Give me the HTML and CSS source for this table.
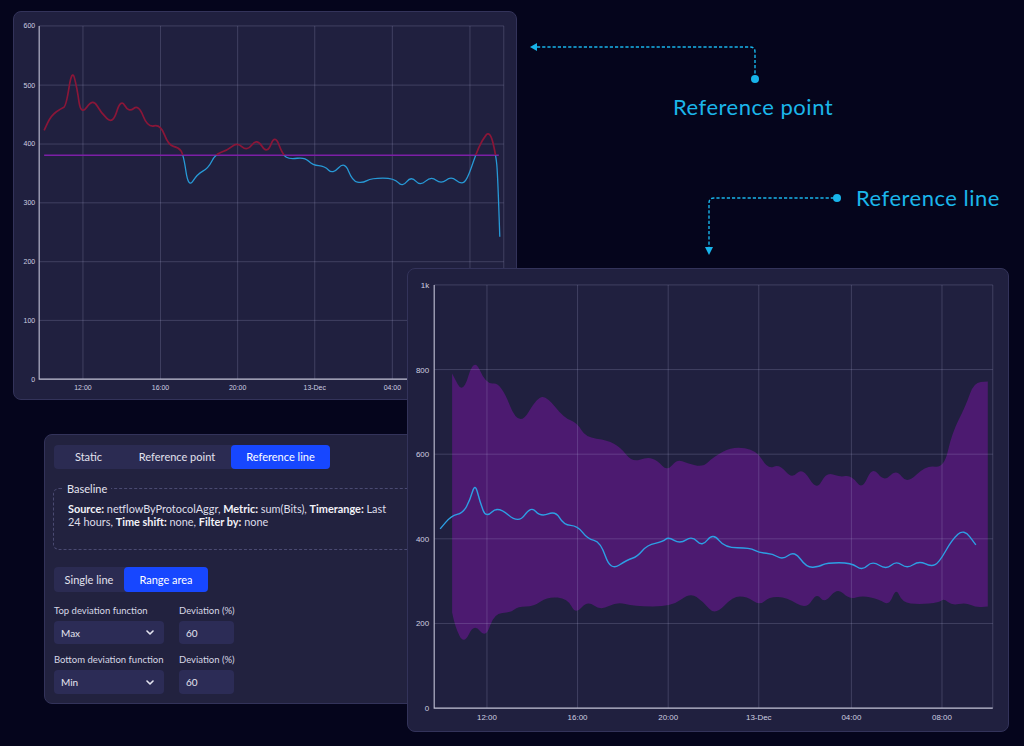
FILE: index.html
```html
<!DOCTYPE html>
<html lang="en">
<head>
<meta charset="utf-8">
<title>Reference line</title>
<link rel="stylesheet" href="styles.css">
</head>
<body>
<div class="stage">
  <svg class="callouts" viewBox="0 0 1024 746" aria-hidden="true">
    <path class="dash" d="M537,47 L750,47 Q755,47 755,52 L755,76"/>
    <polygon class="tip" points="530,47 537,43 537,51"/>
    <circle class="tip" cx="755" cy="79" r="4"/>
    <path class="dash" d="M834,198 L714,198 Q709,198 709,203 L709,247"/>
    <polygon class="tip" points="709,255 705,247 713,247"/>
    <circle class="tip" cx="837" cy="198" r="4"/>
  </svg>
  <div class="callout-label label-point">Reference point</div>
  <div class="callout-label label-line">Reference line</div>

  <section class="card chart-a">
    <svg class="plot" viewBox="13 11 504 389">
      <defs>
        <clipPath id="above"><rect x="13" y="11" width="504" height="144"/></clipPath>
        <clipPath id="below"><rect x="13" y="155" width="504" height="245"/></clipPath>
      </defs>
      <g class="grid">
        <path d="M38,25 H505 M38,84.5 H505 M38,143.7 H505 M38,202.8 H505 M38,262 H505 M38,321 H505"/>
        <path d="M82,25 V380 M160,25 V380 M237.5,25 V380 M315,25 V380 M393,25 V380 M471,25 V380 M505,25 V380"/>
      </g>
      <path class="axis" d="M38,25 V380 H505"/>
      <g class="ylab small">
        <text x="34" y="27.5">600</text>
        <text x="34" y="87">500</text>
        <text x="34" y="146">400</text>
        <text x="34" y="205">300</text>
        <text x="34" y="264.5">200</text>
        <text x="34" y="323.5">100</text>
        <text x="34" y="382.5">0</text>
      </g>
      <g class="xlab small">
        <text x="82" y="390.5">12:00</text>
        <text x="160" y="390.5">16:00</text>
        <text x="237.5" y="390.5">20:00</text>
        <text x="315" y="390.5">13-Dec</text>
        <text x="393" y="390.5">04:00</text>
      </g>
      <line class="refline" x1="43" y1="155" x2="500" y2="155"/>
      <path class="series-blue" clip-path="url(#below)" d="M43,130 L46.5,122.5 Q50,115 55,111.5 Q60,108 62.5,107 Q65,106 68,87 Q71,68 73.5,77.5 Q76,87 78,101 Q80,115 86,106.5 Q92,98 96,105 Q100,112 106,118 Q112,124 116,111 Q120,98 124,105 Q128,112 133,108 Q138,104 142.5,115.5 Q147,127 153.5,125.5 Q160,124 164,134.5 Q168,145 173,146 Q178,147 180.5,150.5 Q183,154 185.5,171 Q188,188 192.5,181 Q197,174 202.5,171 Q208,168 211.5,161 Q215,154 221,152 Q227,150 232,146 Q237,142 242,146.5 Q247,151 252,144.5 Q257,138 262,146 Q267,154 271,144 Q275,134 279,144.5 Q283,155 286.5,157 Q290,159 297.5,158 Q305,157 309,161 Q313,165 319,165.5 Q325,166 329,170 Q333,174 339,167.5 Q345,161 349,171 Q353,181 358,182 Q363,183 367.5,180.5 Q372,178 383.5,178 Q395,178 399,182.5 Q403,187 407.5,181.5 Q412,176 416.5,181 Q421,186 426.5,181 Q432,176 437,180 Q442,184 447,180 Q452,176 457,180 Q462,184 465,182 Q468,180 472.5,167 Q477,154 480,147 Q483,140 487,135 Q491,130 494,142 Q497,154 498,164.5 Q499,175 501,237"/>
      <path class="series-red" clip-path="url(#above)" d="M43,130 L46.5,122.5 Q50,115 55,111.5 Q60,108 62.5,107 Q65,106 68,87 Q71,68 73.5,77.5 Q76,87 78,101 Q80,115 86,106.5 Q92,98 96,105 Q100,112 106,118 Q112,124 116,111 Q120,98 124,105 Q128,112 133,108 Q138,104 142.5,115.5 Q147,127 153.5,125.5 Q160,124 164,134.5 Q168,145 173,146 Q178,147 180.5,150.5 Q183,154 185.5,171 Q188,188 192.5,181 Q197,174 202.5,171 Q208,168 211.5,161 Q215,154 221,152 Q227,150 232,146 Q237,142 242,146.5 Q247,151 252,144.5 Q257,138 262,146 Q267,154 271,144 Q275,134 279,144.5 Q283,155 286.5,157 Q290,159 297.5,158 Q305,157 309,161 Q313,165 319,165.5 Q325,166 329,170 Q333,174 339,167.5 Q345,161 349,171 Q353,181 358,182 Q363,183 367.5,180.5 Q372,178 383.5,178 Q395,178 399,182.5 Q403,187 407.5,181.5 Q412,176 416.5,181 Q421,186 426.5,181 Q432,176 437,180 Q442,184 447,180 Q452,176 457,180 Q462,184 465,182 Q468,180 472.5,167 Q477,154 480,147 Q483,140 487,135 Q491,130 494,142 Q497,154 498,164.5 Q499,175 501,237"/>
    </svg>
  </section>

  <section class="card panel">
    <div class="segmented tabs">
      <button class="seg w-static">Static</button>
      <button class="seg w-point">Reference point</button>
      <button class="seg w-line active">Reference line</button>
    </div>
    <fieldset class="baseline">
      <legend>Baseline</legend>
      <p><b>Source:</b> netflowByProtocolAggr, <b>Metric:</b> sum(Bits), <b>Timerange:</b> Last<br>24 hours, <b>Time shift:</b> none, <b>Filter by:</b> none</p>
    </fieldset>
    <div class="segmented mode">
      <button class="seg w-single">Single line</button>
      <button class="seg w-range active">Range area</button>
    </div>
    <div class="form">
      <label class="lbl">Top deviation function</label>
      <label class="lbl">Deviation (%)</label>
      <div class="select"><span>Max</span><svg class="chev" viewBox="0 0 8 5"><polyline points="1,1 4,4 7,1"/></svg></div>
      <div class="input">60</div>
      <label class="lbl second">Bottom deviation function</label>
      <label class="lbl second">Deviation (%)</label>
      <div class="select tall"><span>Min</span><svg class="chev" viewBox="0 0 8 5"><polyline points="1,1 4,4 7,1"/></svg></div>
      <div class="input tall">60</div>
    </div>
  </section>

  <section class="card chart-b">
    <svg class="plot" viewBox="407 268 602 464">
      <path class="area" d="M451,613 L451,373 L456.5,383.5 Q462,394 467.5,375 Q473,356 479,370 Q485,384 492.5,383 Q500,382 509,405 Q518,428 527.5,412 Q537,396 542,396.5 Q547,397 555,407 Q563,417 570,420 Q577,423 581,430 Q585,437 596,438.5 Q607,440 613.5,443.5 Q620,447 626,454.5 Q632,462 639.5,459.5 Q647,457 652,458.5 Q657,460 662,465.5 Q667,471 672,465 Q677,459 682,461 Q687,463 695,465 Q703,467 708,462 Q713,457 723,451.5 Q733,446 745,448 Q757,450 762.5,459.5 Q768,469 774,466.5 Q780,464 786,471.5 Q792,479 797.5,473 Q803,467 810,479 Q817,491 822,481.5 Q827,472 833.5,474.5 Q840,477 846,476 Q852,475 857.5,482.5 Q863,490 868,478 Q873,466 879,474 Q885,482 891,475.5 Q897,469 902.5,476.5 Q908,484 917.5,474.5 Q927,465 936,466.5 Q945,468 949,450.5 Q953,433 960,419 Q967,405 971,393.5 Q975,382 982,381.5 L989,381 L989,607 L983,607.5 Q977,608 972,605.5 Q967,603 960,604.5 Q953,606 949,602.5 Q945,599 942.5,601 Q940,603 930,604 Q920,605 911.5,604 Q903,603 900,595.5 Q897,588 893.5,597 Q890,606 885,603 Q880,600 871.5,598 Q863,596 856.5,598 Q850,600 844,594 Q838,588 831.5,596 Q825,604 821,598.5 Q817,593 812,601.5 Q807,610 797,604 Q787,598 778.5,597.5 Q770,597 765,601.5 Q760,606 753.5,601.5 Q747,597 740,597 Q733,597 724,606.5 Q715,616 709,609 Q703,602 696.5,597.5 Q690,593 681,600 Q672,607 652.5,607 Q633,607 625,604.5 Q617,602 608.5,606.5 Q600,611 593.5,606 Q587,601 581,608 Q575,615 571,607 Q567,599 557,598 Q547,597 540,602 Q533,607 525,607 Q517,607 513.5,610 Q510,613 501.5,613.5 Q493,614 489,626.5 Q485,639 479,631.5 Q473,624 468,634.5 Q463,645 458.5,636.5 Q454,628 451,613 Z"/>
      <g class="grid">
        <path d="M433,284 H994 M433,369 H994 M433,454 H994 M433,539 H994 M433,624 H994"/>
        <path d="M486,284 V709 M577,284 V709 M668,284 V709 M759,284 V709 M852,284 V709 M943,284 V709 M994,284 V709"/>
      </g>
      <path class="axis" d="M433,284 V709 H994"/>
      <g class="ylab big">
        <text x="428" y="287">1k</text>
        <text x="428" y="372">800</text>
        <text x="428" y="457">600</text>
        <text x="428" y="542">400</text>
        <text x="428" y="627">200</text>
        <text x="428" y="712">0</text>
      </g>
      <g class="xlab big">
        <text x="486" y="721">12:00</text>
        <text x="577" y="721">16:00</text>
        <text x="668" y="721">20:00</text>
        <text x="759" y="721">13-Dec</text>
        <text x="852" y="721">04:00</text>
        <text x="943" y="721">08:00</text>
      </g>
      <path class="series-line" d="M439,529 L444.5,522.5 Q450,516 456,514.5 Q462,513 465.5,506.5 Q469,500 471.5,491.5 Q474,483 476.5,492.5 Q479,502 482,510 Q485,518 491,512 Q497,506 507.5,515 Q518,524 524,515 Q530,506 535,511.5 Q540,517 547.5,514 Q555,511 559,518 Q563,525 570,525.5 Q577,526 582,532.5 Q587,539 593.5,540.5 Q600,542 605,556.5 Q610,571 618.5,565.5 Q627,560 632,558.5 Q637,557 642,551 Q647,545 655,543.5 Q663,542 665.5,539.5 Q668,537 674,540.5 Q680,544 686,540 Q692,536 697,541.5 Q702,547 707.5,540 Q713,533 719,540.5 Q725,548 737.5,548 Q750,548 755,550.5 Q760,553 766.5,553.5 Q773,554 778,557 Q783,560 789,555.5 Q795,551 801,559.5 Q807,568 813.5,567.5 Q820,567 823.5,565 Q827,563 839.5,563 Q852,563 857.5,567 Q863,571 868,566 Q873,561 880,565.5 Q887,570 892,565.5 Q897,561 902.5,565 Q908,569 914,565 Q920,561 926,564 Q932,567 936,565 Q940,563 946.5,551.5 Q953,540 959,534.5 Q965,529 971,537 L977,545"/>
    </svg>
  </section>
</div>
</body>
</html>
```

FILE: styles.css
```css
* { box-sizing: border-box; }
html, body { margin: 0; padding: 0; }
body {
  background: #05051c;
  font-family: "Lato", "Noto Sans", sans-serif;
  color: #e4e4f0;
}
.stage {
  position: relative;
  width: 1024px;
  height: 746px;
  overflow: hidden;
  background: #05051c;
}

/* callouts */
.callouts {
  position: absolute;
  left: 0; top: 0;
  width: 1024px; height: 746px;
}
.callouts .dash {
  fill: none;
  stroke: #18b4ea;
  stroke-width: 1.4;
  stroke-dasharray: 3.2 2;
}
.callouts .tip { fill: #18b4ea; }
.callout-label {
  position: absolute;
  font-family: "Lato", "Noto Sans", sans-serif;
  font-size: 22px;
  line-height: 22px;
  letter-spacing: 0.5px;
  color: #1bb6ea;
  white-space: nowrap;
}
.label-point { left: 673px; top: 96px; }
.label-line { left: 856px; top: 187px; }

/* cards */
.card {
  position: absolute;
  background: #20203f;
  border: 1px solid #33335a;
  border-radius: 8px;
  overflow: hidden;
}
.chart-a { left: 13px; top: 11px; width: 504px; height: 389px; }
.chart-b { left: 407px; top: 268px; width: 602px; height: 464px; }
.plot { display: block; width: 100%; height: 100%; }

.grid path { fill: none; stroke: rgba(190, 190, 230, 0.26); stroke-width: 0.8; }
.axis { fill: none; stroke: #c4c4d8; stroke-width: 1.1; }
.ylab text, .xlab text {
  font-family: "Liberation Sans", Arial, sans-serif;
  fill: #cfcfe0;
}
.ylab text { text-anchor: end; }
.xlab text { text-anchor: middle; }
.small text { font-size: 7px; }
.big text { font-size: 8px; }

.refline { stroke: #7c1fa6; stroke-width: 1.4; }
.series-blue { fill: none; stroke: #2799d6; stroke-width: 1.3; }
.series-red { fill: none; stroke: #8a1638; stroke-width: 1.7; }
.area { fill: #4c1a70; }
.series-line { fill: none; stroke: #2d9fe4; stroke-width: 1.4; }

/* control panel */
.panel {
  left: 44px;
  top: 434px;
  width: 400px;
  height: 270px;
  padding: 10px 0 9px 9px;
  display: flex;
  flex-direction: column;
  align-items: flex-start;
  background: #22223f;
}
.segmented {
  display: flex;
  background: #2b2b52;
  border-radius: 4px;
}
.tabs { height: 24px; }
.mode { height: 25px; margin-top: 17px; }
.seg {
  border: 0;
  background: transparent;
  color: #e2e2ee;
  font-family: "Lato", "Noto Sans", sans-serif;
  font-size: 11px;
  padding: 0;
  border-radius: 4px;
  text-align: center;
}
.seg.active { background: #1747ff; color: #ffffff; }
.w-static { width: 69px; }
.w-point { width: 108px; }
.w-line { width: 99px; }
.w-single { width: 70px; }
.w-range { width: 84px; }

.baseline {
  margin: 13px 0 0 -1px;
  width: 380px;
  height: 70px;
  border: 1px dashed #4a4a72;
  border-radius: 6px;
  padding: 0 14px;
}
.baseline legend {
  font-size: 11px;
  line-height: 13px;
  padding: 0 4px;
  margin-left: -5px;
  color: #e4e4f0;
}
.baseline p {
  margin: 7px 0 0 0;
  font-size: 10.9px;
  line-height: 13px;
  color: #dedeea;
  white-space: nowrap;
}
.baseline b { font-weight: 700; color: #f2f2f8; }

.form {
  margin-top: 12px;
  display: grid;
  grid-template-columns: 110px 55px;
  column-gap: 15px;
  row-gap: 4px;
}
.lbl {
  font-size: 9.5px;
  line-height: 13px;
  color: #d8d8e6;
  white-space: nowrap;
}
.lbl.second { margin-top: 5px; }
.select, .input {
  height: 23px;
  background: #2c2c56;
  border-radius: 4px;
  font-size: 10px;
  color: #e4e4f0;
  display: flex;
  align-items: center;
  padding: 0 7px;
}
.select.tall, .input.tall { height: 24px; }
.select { justify-content: space-between; padding-right: 10px; }
.chev { width: 8px; height: 5px; }
.chev polyline { fill: none; stroke: #e4e4f0; stroke-width: 1.6; stroke-linecap: round; stroke-linejoin: round; }
```
